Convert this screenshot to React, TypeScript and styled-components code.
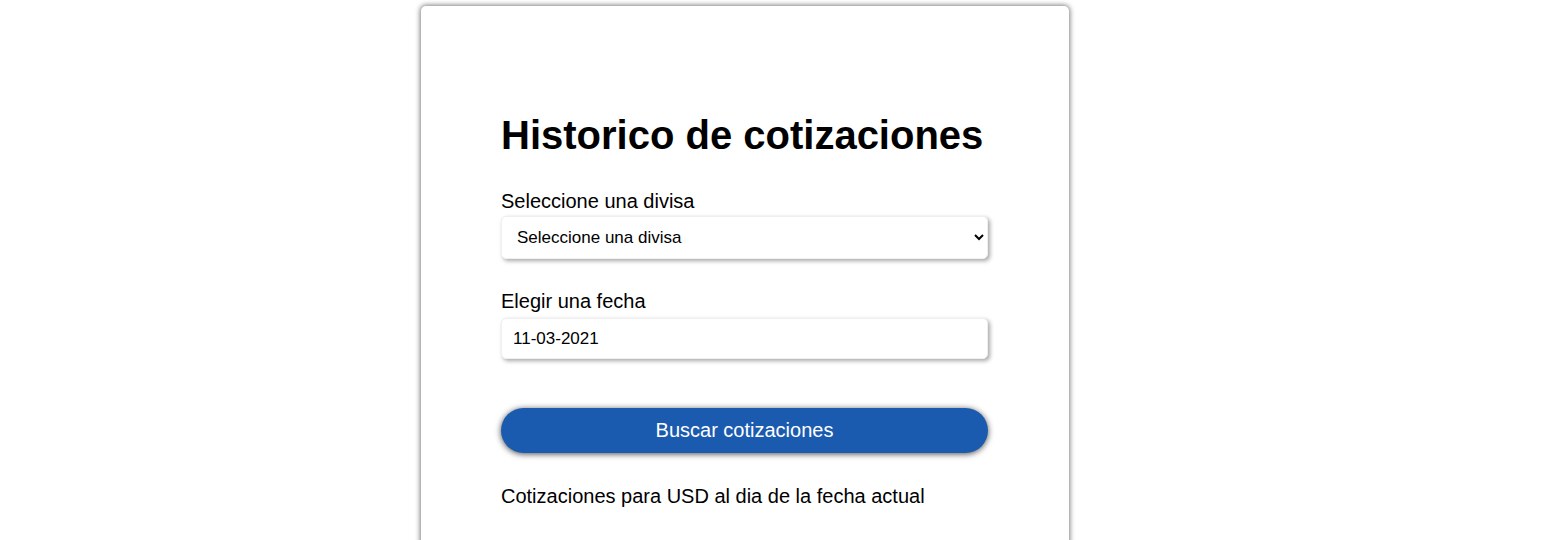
import React from "react";
import styled, { createGlobalStyle } from "styled-components";

const Global = createGlobalStyle`
  html, body { margin: 0; padding: 0; background: #fff; }
  body { font-family: "Liberation Sans", Arial, sans-serif; color: #000; }
`;

const Page = styled.div`
  padding: 6px 0 0 421px;
`;

const Card = styled.main`
  width: 648px;
  box-sizing: border-box;
  min-height: 560px;
  padding: 80px 81px 0 80px;
  background: #fff;
  border-radius: 5px;
  box-shadow: 0 0 5px 1px rgba(0, 0, 0, 0.5);
`;

const Title = styled.h1`
  margin: 0 0 32px;
  padding-top: 26px;
  font-size: 40px;
  line-height: 46px;
  font-weight: 700;
`;

const Field = styled.div<{ $mb: number; $gap: number }>`
  display: flex;
  flex-direction: column;
  gap: ${(p) => p.$gap}px;
  margin-bottom: ${(p) => p.$mb}px;
`;

const Label = styled.label`
  font-size: 20px;
  line-height: 23px;
`;

const Select = styled.select`
  height: 43px;
  width: 100%;
  box-sizing: border-box;
  padding: 0 4px 0 11px;
  font-family: "Liberation Sans", Arial, sans-serif;
  font-size: 17px;
  color: #000;
  background: #fff;
  border: 1px solid #f0f0f0;
  border-radius: 5px;
  box-shadow: 2px 2px 4px rgba(0, 0, 0, 0.35);
  outline: none;
`;

const Input = styled.input`
  height: 41px;
  width: 100%;
  box-sizing: border-box;
  padding: 0 11px;
  font-family: "Liberation Sans", Arial, sans-serif;
  font-size: 17px;
  color: #000;
  background: #fff;
  border: 1px solid #f0f0f0;
  border-radius: 5px;
  box-shadow: 2px 2px 4px rgba(0, 0, 0, 0.35);
  outline: none;
`;

const Button = styled.button`
  display: block;
  width: 100%;
  height: 45px;
  border: none;
  border-radius: 23px;
  background: #1a5bb0;
  color: #fff;
  font-family: "Liberation Sans", Arial, sans-serif;
  font-size: 20px;
  box-shadow: 0 1px 6px rgba(0, 0, 0, 0.7);
  cursor: pointer;
`;

const Note = styled.p`
  margin: 32px 0 0;
  font-size: 20px;
  line-height: 23px;
`;

export default function App() {
  return (
    <>
      <Global />
      <Page>
        <Card>
          <Title>Historico de cotizaciones</Title>
          <Field $mb={31} $gap={3}>
            <Label htmlFor="divisa">Seleccione una divisa</Label>
            <Select id="divisa" defaultValue="">
              <option value="">Seleccione una divisa</option>
              <option value="USD">USD</option>
              <option value="EUR">EUR</option>
            </Select>
          </Field>
          <Field $mb={49} $gap={5}>
            <Label htmlFor="fecha">Elegir una fecha</Label>
            <Input id="fecha" type="text" defaultValue="11-03-2021" />
          </Field>
          <Button>Buscar cotizaciones</Button>
          <Note>Cotizaciones para USD al dia de la fecha actual</Note>
        </Card>
      </Page>
    </>
  );
}
